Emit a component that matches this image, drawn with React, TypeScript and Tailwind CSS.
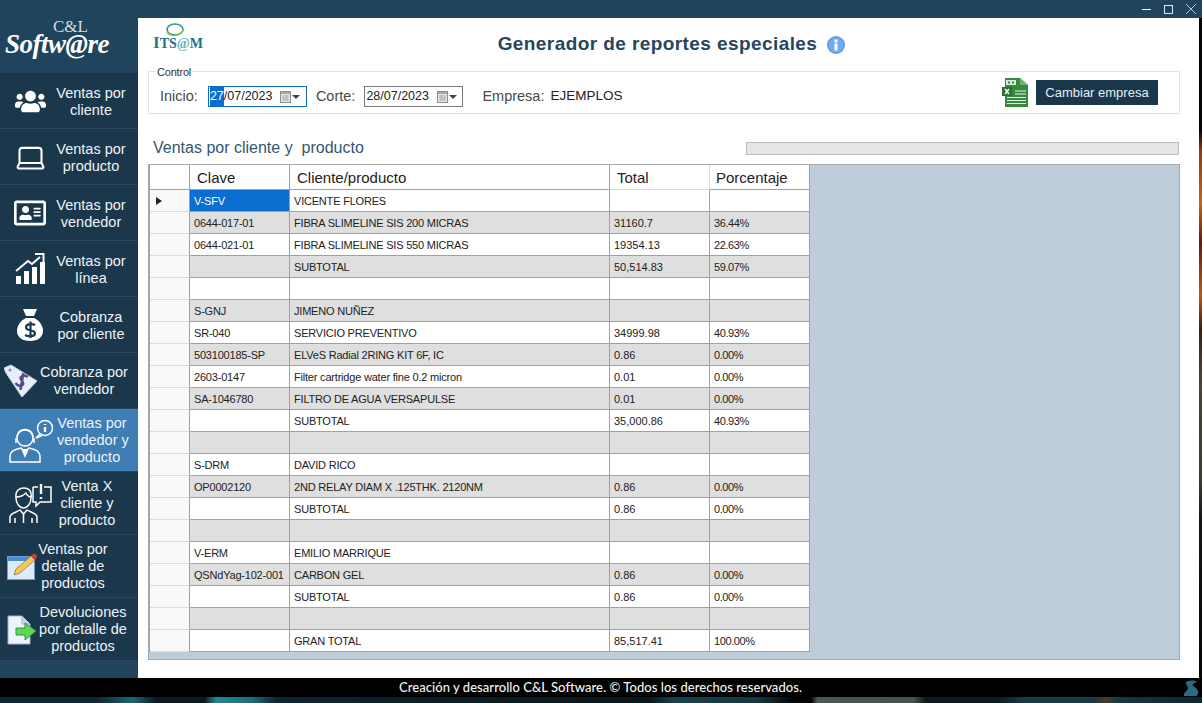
import type { ReactNode } from 'react'
import { FaUsers, FaRegAddressCard } from 'react-icons/fa'
import { LuLaptop } from 'react-icons/lu'

const FONT = "font-['Liberation_Sans',Arial,sans-serif]"

type GridRow = { clave?: string; nombre?: string; total?: string; pct?: string; sel?: boolean }

const ROWS: GridRow[] = [
  { clave: 'V-SFV', nombre: 'VICENTE FLORES', sel: true },
  { clave: '0644-017-01', nombre: 'FIBRA SLIMELINE SIS 200 MICRAS', total: '31160.7', pct: '36.44%' },
  { clave: '0644-021-01', nombre: 'FIBRA SLIMELINE SIS 550 MICRAS', total: '19354.13', pct: '22.63%' },
  { nombre: 'SUBTOTAL', total: '50,514.83', pct: '59.07%' },
  {},
  { clave: 'S-GNJ', nombre: 'JIMENO NUÑEZ' },
  { clave: 'SR-040', nombre: 'SERVICIO PREVENTIVO', total: '34999.98', pct: '40.93%' },
  { clave: '503100185-SP', nombre: 'ELVeS Radial 2RING KIT 6F, IC', total: '0.86', pct: '0.00%' },
  { clave: '2603-0147', nombre: 'Filter cartridge water fine 0.2 micron', total: '0.01', pct: '0.00%' },
  { clave: 'SA-1046780', nombre: 'FILTRO DE AGUA VERSAPULSE', total: '0.01', pct: '0.00%' },
  { nombre: 'SUBTOTAL', total: '35,000.86', pct: '40.93%' },
  {},
  { clave: 'S-DRM', nombre: 'DAVID RICO' },
  { clave: 'OP0002120', nombre: '2ND RELAY DIAM X .125THK. 2120NM', total: '0.86', pct: '0.00%' },
  { nombre: 'SUBTOTAL', total: '0.86', pct: '0.00%' },
  {},
  { clave: 'V-ERM', nombre: 'EMILIO MARRIQUE' },
  { clave: 'QSNdYag-102-001', nombre: 'CARBON GEL', total: '0.86', pct: '0.00%' },
  { nombre: 'SUBTOTAL', total: '0.86', pct: '0.00%' },
  {},
  { nombre: 'GRAN TOTAL', total: '85,517.41', pct: '100.00%' },
]

function ChartIcon() {
  return (
    <svg width="30" height="32" viewBox="0 0 30 32" fill="white">
      <rect x="1" y="23" width="5" height="8" />
      <rect x="9" y="18" width="5" height="13" />
      <rect x="17" y="14" width="5" height="17" />
      <rect x="25" y="9" width="5" height="22" />
      <path d="M1 18 L13 8 L17 11 L25 4" fill="none" stroke="white" strokeWidth="2" />
      <path d="M20 1 H28.5 V9" fill="none" stroke="white" strokeWidth="2" />
    </svg>
  )
}

function BagIcon() {
  return (
    <svg width="26" height="32" viewBox="0 0 26 32">
      <path d="M6 0 L20 0 L17 7 L9 7 Z" fill="white" />
      <path d="M9 9 H17 C23 12 26 17 26 22 C26 28 21 32 13 32 C5 32 0 28 0 22 C0 17 3 12 9 9 Z" fill="white" />
      <path d="M18 16 C16 14.5 9 14.5 9 18.5 C9 22.5 18 20 18 24.5 C18 28 10.5 27.5 8 26 M13.5 12.5 V29" fill="none" stroke="#1d3a50" strokeWidth="2.2" />
    </svg>
  )
}

function TagIcon() {
  return (
    <svg width="34" height="34" viewBox="0 0 34 34">
      <path d="M0 4 L7 1 L33 17 L18 33 L2 9 Z" fill="#e8eef8" stroke="#c4cfe4" />
      <circle cx="6" cy="6" r="1.5" fill="#7b8db5" />
      <path d="M23 12 C19 10 14 13 17 16 C20 18 21 21 17 22 C15 23 13 21 12 20 M18 9 L18 26" fill="none" stroke="#564a8c" strokeWidth="2.6" transform="rotate(10 18 17)" />
    </svg>
  )
}

function AgentIcon() {
  return (
    <svg width="44" height="44" viewBox="0 0 44 44" fill="none" stroke="white" strokeWidth="1.5">
      <circle cx="16" cy="19" r="8" />
      <path d="M8 18 C8 8 24 8 24 18 M7 19 V24 M25 19 V24" />
      <path d="M1 43 V37 C1 32 7 30 12 29 L16 33 L20 29 C25 30 31 32 31 37 V43 Z" />
      <path d="M13 30 L16 37 L19 30" fill="white" />
      <circle cx="36" cy="9" r="7.5" />
      <path d="M31 15 L27 19 L33 16.5" />
      <path d="M36 5 V6 M36 8 V13" strokeWidth="2.4" />
    </svg>
  )
}

function ClientIcon() {
  return (
    <svg width="44" height="40" viewBox="0 0 44 40" fill="none" stroke="white" strokeWidth="1.5">
      <path d="M7 14 C6 6 11 4 15 4 C20 4 23 7 22 14 C22 20 18 24 14.5 24 C11 24 7 20 7 14 Z" />
      <path d="M7 13 C11 13 15 11 17 9 C18 11 20 13 22 13" />
      <path d="M1 39 V33 C1 29 8 28 11 26 L14.5 30 L18 26 C21 28 28 29 28 33 V39" />
      <path d="M14.5 30 V39 M6 34 V39 M23 34 V39" />
      <path d="M24 3 H29 M35 3 H42 V18 H31 L27 22 V18 H24 V3" />
      <path d="M32 0 V10 M32 13 V15" strokeWidth="2.4" />
    </svg>
  )
}

function EditIcon() {
  return (
    <svg width="31" height="27" viewBox="0 0 31 27">
      <rect x="0.5" y="3.5" width="27" height="23" fill="#dfeafa" stroke="#6d9bd6" />
      <rect x="1" y="4" width="26" height="4" fill="#4a8bd8" />
      <path d="M7 22 L9 16 L24 3 L28 7 L13 20 Z" fill="#f2c75e" stroke="#8a6a20" strokeWidth="0.7" />
      <path d="M24 3 L26 1 C28 0 30 2 30 4 L28 7 Z" fill="#d23a3a" />
    </svg>
  )
}

function ReturnIcon() {
  return (
    <svg width="30" height="30" viewBox="0 0 30 30">
      <path d="M1 1 H15 L23 9 V29 H1 Z" fill="#eef3fc" stroke="#9db3d8" />
      <path d="M15 1 V9 H23" fill="#c7d6ef" stroke="#9db3d8" />
      <path d="M9 13 H18 V8 L29 16 L18 25 V20 H9 Z" fill="#63d35a" stroke="#2f9a36" />
    </svg>
  )
}

function ExcelIcon() {
  return (
    <svg width="26" height="30" viewBox="0 0 26 30">
      <path d="M3 0 H18 L26 7 V29 H3 Z" fill="#36893f" />
      <path d="M18 0 L26 7 H18 Z" fill="#6fb076" />
      <rect x="4" y="2" width="10" height="5" fill="#d8ead9" />
      <rect x="6" y="3.5" width="2" height="2" fill="#36893f" />
      <rect x="10" y="3.5" width="2" height="2" fill="#36893f" />
      <rect x="0" y="9" width="10" height="9" fill="#2c6e35" />
      <path d="M3 11 L7 16 M7 11 L3 16" stroke="white" strokeWidth="1.5" />
      <path d="M13 13 H24 M13 16 H24 M5 19.5 H24 M5 22.5 H24 M5 25.5 H24" stroke="#e6f2e7" strokeWidth="1" />
    </svg>
  )
}

function CalendarGlyph() {
  return (
    <svg className="ml-[8px] shrink-0" width="11" height="12" viewBox="0 0 11 12">
      <rect x="0.5" y="0.5" width="10" height="11" fill="#e6e6e6" stroke="#8d8d8d" />
      <rect x="1" y="1" width="9" height="2" fill="#a8a8a8" />
      <path d="M2 5 H9 M2 7 H9 M2 9 H9 M4 4 V10 M7 4 V10" stroke="#a0a0a0" strokeWidth="0.7" />
    </svg>
  )
}

function SideItem(props: { icon: ReactNode; lines: string[]; iconBox: string; textBox: string; h: string; active?: boolean }) {
  return (
    <div
      className={`flex items-center border-b border-[#29475d] pt-[1px] ${props.h} ${
        props.active ? 'bg-[#3f7db5]' : 'bg-[#1b374b]'
      }`}
    >
      <div className={`flex shrink-0 items-center justify-center ${props.iconBox}`}>{props.icon}</div>
      <div className={`shrink-0 text-center text-[14.5px] leading-[17px] text-[#edf3f7] ${props.textBox}`}>
        {props.lines.map((l) => (
          <div key={l} className="whitespace-nowrap">
            {l}
          </div>
        ))}
      </div>
    </div>
  )
}

function Sidebar() {
  return (
    <aside className="flex w-[138px] shrink-0 flex-col bg-[#1f445c]">
      <div className="relative h-[55px] shrink-0">
        <span className="absolute left-[53px] top-[2px] font-['Liberation_Serif',serif] text-[17px] leading-[13px] text-[#d5dde3]">C&amp;L</span>
        <span className="absolute left-[5px] top-[15px] whitespace-nowrap font-['Liberation_Serif',serif] text-[27px] font-bold italic leading-[22px] tracking-[-0.5px] text-white">
          Softw@re
        </span>
      </div>
      <SideItem h="h-[56px]" iconBox="w-[56px] pl-[4px]" textBox="mt-[2px] w-[70px]" icon={<FaUsers size={31} color="white" />} lines={['Ventas por', 'cliente']} />
      <SideItem h="h-[56px]" iconBox="w-[56px] pl-[4px]" textBox="mt-[2px] w-[70px]" icon={<LuLaptop size={33} color="white" strokeWidth={1.5} />} lines={['Ventas por', 'producto']} />
      <SideItem h="h-[56px]" iconBox="w-[56px] pl-[4px]" textBox="mt-[2px] w-[70px]" icon={<FaRegAddressCard size={32} color="white" />} lines={['Ventas por', 'vendedor']} />
      <SideItem h="h-[56px]" iconBox="w-[56px] pl-[4px]" textBox="mt-[2px] w-[70px]" icon={<ChartIcon />} lines={['Ventas por', 'línea']} />
      <SideItem h="h-[56px]" iconBox="w-[56px] pl-[4px]" textBox="mt-[2px] w-[70px]" icon={<BagIcon />} lines={['Cobranza', 'por cliente']} />
      <SideItem h="h-[56px]" iconBox="w-[38px] pl-[3px]" textBox="w-[92px]" icon={<TagIcon />} lines={['Cobranza por', 'vendedor']} />
      <SideItem active h="h-[63px]" iconBox="w-[57px] pl-[4px]" textBox="w-[70px]" icon={<AgentIcon />} lines={['Ventas por', 'vendedor y', 'producto']} />
      <SideItem h="h-[63px]" iconBox="w-[56px] pl-[5px]" textBox="w-[62px]" icon={<ClientIcon />} lines={['Venta X', 'cliente y', 'producto']} />
      <SideItem h="h-[63px]" iconBox="w-[38px] pl-[6px]" textBox="w-[70px]" icon={<EditIcon />} lines={['Ventas por', 'detalle de', 'productos']} />
      <SideItem h="h-[63px]" iconBox="w-[38px] pl-[6px]" textBox="w-[90px]" icon={<ReturnIcon />} lines={['Devoluciones', 'por detalle de', 'productos']} />
    </aside>
  )
}

function DateBox(props: { value: string; active?: boolean }) {
  return (
    <div
      className={`flex h-[21px] w-[99px] items-center border pl-[1px] text-[12.5px] text-[#222] ${
        props.active ? 'border-[#0f6cbd]' : 'border-[#7a7a7a]'
      }`}
    >
      {props.active ? (
        <>
          <span className="bg-[#0a6fd0] text-white">{props.value.slice(0, 2)}</span>
          <span>{props.value.slice(2)}</span>
        </>
      ) : (
        <span>{props.value}</span>
      )}
      <CalendarGlyph />
      <span className="ml-[1px] h-0 w-0 border-x-[4px] border-t-[4px] border-x-transparent border-t-[#444]" />
    </div>
  )
}

function GridCell(props: { w: string; children?: ReactNode; cls?: string }) {
  return (
    <div className={`flex shrink-0 items-center overflow-hidden whitespace-nowrap border-r border-b border-[#a0a0a0] pl-[4px] pt-[2px] ${props.w} ${props.cls ?? ''}`}>
      {props.children}
    </div>
  )
}

function DataGrid() {
  return (
    <div className="mt-[5px] h-[496px] border border-[#a9a9a9] bg-[#bfcddb]">
      <div className="w-[661px] border-l border-[#a0a0a0]">
        <div className="flex h-[25px] bg-white text-[15px] text-[#222]">
          <div className="w-[40px] shrink-0 border-r border-b border-[#a0a0a0]" />
          <div className="flex w-[100px] shrink-0 items-center border-r border-b border-[#a0a0a0] pl-[7px] pt-[2px]">Clave</div>
          <div className="flex w-[320px] shrink-0 items-center border-r border-b border-[#a0a0a0] pl-[7px] pt-[2px]">Cliente/producto</div>
          <div className="flex w-[100px] shrink-0 items-center border-r border-b border-[#dcdcdc] pl-[7px] pt-[2px]">Total</div>
          <div className="flex w-[100px] shrink-0 items-center border-r border-b border-[#a0a0a0] pl-[6px] pt-[2px]">Porcentaje</div>
        </div>
        {ROWS.map((row, i) => {
          const bg = i % 2 === 1 ? 'bg-[#dfdfdf]' : 'bg-white'
          return (
            <div key={i} className="flex h-[22px] text-[11px] tracking-[-0.2px] text-[#222]">
              <div className="flex w-[40px] shrink-0 items-center border-r border-b border-[#a0a0a0] border-b-[#dddddd] bg-[#f9f9f9] pl-[6px]">
                {i === 0 && <span className="h-0 w-0 border-y-[4px] border-l-[6px] border-y-transparent border-l-[#222]" />}
              </div>
              <GridCell w="w-[100px]" cls={row.sel ? 'bg-[#0a6fd0] text-white' : bg}>{row.clave}</GridCell>
              <GridCell w="w-[320px]" cls={bg}>{row.nombre}</GridCell>
              <GridCell w="w-[100px]" cls={`${bg} tracking-normal`}>{row.total}</GridCell>
              <GridCell w="w-[100px]" cls={`${bg} tracking-[-0.4px]`}>{row.pct}</GridCell>
            </div>
          )
        })}
      </div>
    </div>
  )
}

export default function App() {
  return (
    <div className={`flex h-[703px] w-[1202px] flex-col overflow-hidden bg-[#1f445c] ${FONT}`}>
      {/* title bar */}
      <div className="flex h-[18px] shrink-0 items-center justify-end gap-[13px] pr-[6px] text-white">
        <span className="h-[1px] w-[9px] bg-white" />
        <span className="h-[9px] w-[9px] border border-[#dfe7ec]" />
        <svg width="10" height="10" viewBox="0 0 10 10" stroke="#dfe7ec" strokeWidth="0.8">
          <path d="M0 0 L10 10 M10 0 L0 10" />
        </svg>
      </div>

      <div className="flex h-[660px] shrink-0">
        <Sidebar />
        <main className="flex w-[1061px] shrink-0 flex-col bg-white pl-[10px] pr-[19px]">
          {/* header */}
          <div className="relative h-[53px] shrink-0">
            <div className="absolute left-[5px] top-[5px] w-[52px]">
              <svg className="ml-[9px]" width="24" height="14" viewBox="0 0 24 14" fill="none">
                <ellipse cx="13" cy="6.5" rx="8" ry="5.5" stroke="#2b8f93" strokeWidth="1.5" />
                <path d="M5 9 C9 14 18 14 22 6" stroke="#8bc34a" strokeWidth="1.5" />
              </svg>
              <div className="mt-[-1px] whitespace-nowrap font-['Liberation_Serif',serif] text-[14px] font-bold leading-[13px] text-[#1d6f8e]">
                <span className="text-[17px] text-[#13808a]">I</span>TS<span className="text-[#62b5bd]">@</span>M
              </div>
            </div>
            <div className="flex h-full items-center justify-center pl-[15px]">
              <h1 className="whitespace-nowrap text-[19px] font-bold tracking-[0.42px] text-[#24465e]">Generador de reportes especiales</h1>
              <svg className="ml-[10px]" width="18" height="18" viewBox="0 0 18 18">
                <circle cx="9" cy="9" r="9" fill="#5f9be6" />
                <circle cx="9" cy="9" r="7.5" fill="#74aaf0" />
                <rect x="7.5" y="7.5" width="3" height="7" fill="white" />
                <circle cx="9" cy="5" r="1.7" fill="white" />
              </svg>
            </div>
          </div>

          {/* control group */}
          <div className="relative flex h-[43px] shrink-0 items-center border border-[#e2e2e2] pl-[11px] pr-[21px] pt-[8px]">
            <span className="absolute left-[7px] top-[-6px] bg-white px-[1px] text-[11px] leading-[13px] tracking-[-0.2px] text-[#333]">Control</span>
            <span className="text-[14.5px] text-[#4a4a4a]">Inicio:</span>
            <div className="ml-[10px]"><DateBox active value="27/07/2023" /></div>
            <span className="ml-[9px] text-[14.5px] text-[#4a4a4a]">Corte:</span>
            <div className="ml-[9px]"><DateBox value="28/07/2023" /></div>
            <span className="ml-[19px] text-[14.5px] text-[#4a4a4a]">Empresa:</span>
            <span className="ml-[6px] text-[13.5px] text-[#222]">EJEMPLOS</span>
            <div className="ml-auto flex items-center gap-[8px] pb-[8px]">
              <ExcelIcon />
              <button className="h-[25px] w-[122px] bg-[#1b374b] text-[13px] text-[#e7eef2]">Cambiar empresa</button>
            </div>
          </div>

          {/* section heading + progress */}
          <div className="mt-[23px] flex h-[22px] shrink-0 items-center justify-between pl-[5px] pr-[1px]">
            <span className="whitespace-pre text-[16px] text-[#35566e]">Ventas por cliente y  producto</span>
            <div className="h-[13px] w-[433px] border border-[#bcbcbc] bg-[#e6e6e6]" />
          </div>

          <DataGrid />
        </main>
        <div className="w-[3px] shrink-0 bg-[linear-gradient(180deg,#050505_0%,#050505_17%,#8a3a14_20%,#c8641c_28%,#5a2010_34%,#b85a1c_42%,#3c2016_47%,#4a4438_55%,#3c3c34_70%,#151515_76%,#050505_100%)]" />
      </div>

      {/* footer */}
      <footer className="relative flex h-[19px] shrink-0 items-center justify-center bg-black pr-[1px] font-['Lato',sans-serif] text-[13px] font-medium tracking-[0.05px] text-[#f2f2f2]">
        Creación y desarrollo C&amp;L Software. © Todos los derechos reservados.
        <svg className="absolute right-[2px] top-[2px]" width="18" height="17" viewBox="0 0 18 17" fill="#2c6a86">
          <path d="M2 16 C1 12 6 11 6 8 C6 5 3 5 4 2 C7 0 13 0 15 2 L11 4 C9 6 15 7 16 11 C17 14 15 16 13 16 Z" />
        </svg>
      </footer>
      <div className="h-[6px] shrink-0 bg-[linear-gradient(90deg,#0a2630_0%,#0a2630_8%,#166a78_11%,#0a1a20_13%,#0a1a20_17%,#1a8a94_18%,#14707c_21%,#0a2630_23%,#08161c_54%,#14434e_56%,#103a44_63%,#050505_66%,#050505_67.5%,#4a5a50_68%,#46524a_76%,#0a1a20_77%,#0a1a20_83%,#123a48_85%,#123a48_91%,#4a3a28_92%,#123a48_93%,#0a2630_100%)]" />
    </div>
  )
}
